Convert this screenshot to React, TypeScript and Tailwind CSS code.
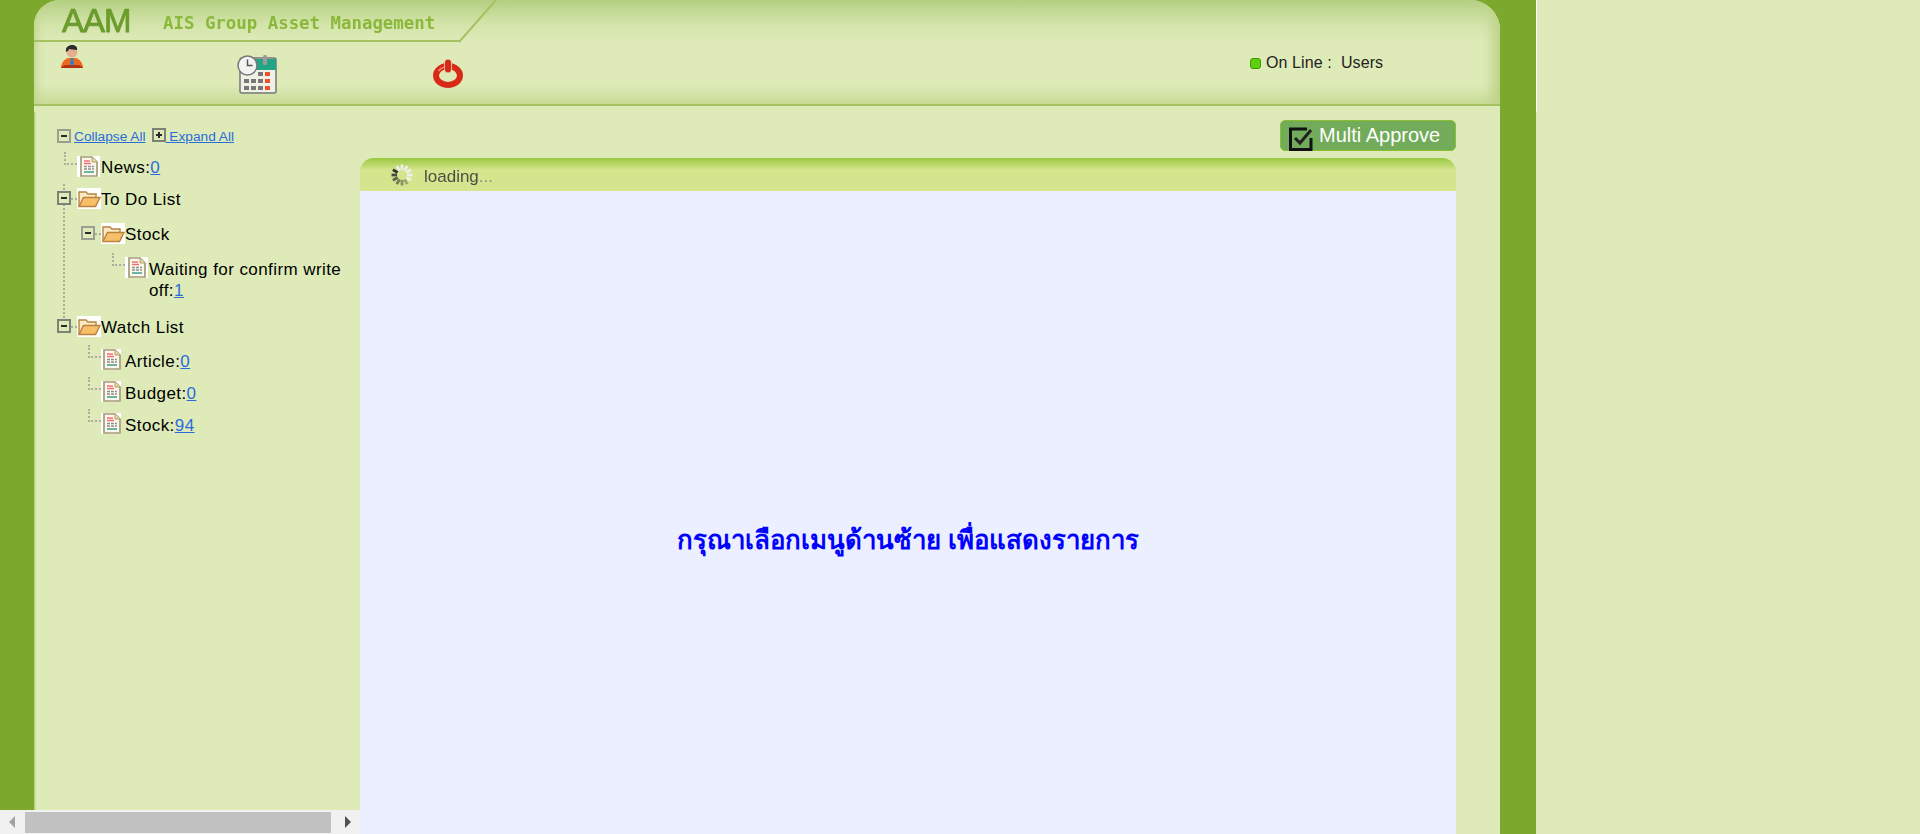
import type { ReactNode } from 'react'

// Tree icons are white-backed in the original, like old gif files
function FileIcon({ w = 23 }: { w?: number }) {
  const x = w === 23 ? 3 : 2
  return (
    <svg width={w} height={21} viewBox={`0 0 ${w} 21`} className="shrink-0 bg-white">
      <g transform={`translate(${x} 0)`}>
        <path d="M1 1h11l5 5v14H1z" fill="#fbf8ef" stroke="#a59a78" strokeWidth="1.7" />
        <path d="M12 1v5h5" fill="#e8d9a8" stroke="#b79f5f" />
        <path d="M4 5h6M4 7.5h7" stroke="#ef6f6f" strokeWidth="1.4" />
        <path d="M4 10.5h10M4 13h10" stroke="#8d8d8d" strokeWidth="1.4" strokeDasharray="3 1" />
        <path d="M4 16h10" stroke="#3f9d83" strokeWidth="1.5" />
      </g>
    </svg>
  )
}

function FolderIcon() {
  return (
    <svg width={24} height={21} viewBox="0 0 24 21" className="shrink-0 bg-white">
      <path d="M2 18V4h7l2 2h8v4" fill="#fbe9c4" stroke="#b9823f" strokeWidth="1.4" />
      <path d="M2 18.5l4.5-9H23l-4.5 9z" fill="#f8bf6b" stroke="#b9823f" strokeWidth="1.4" />
    </svg>
  )
}

function Expander({ open = true, dark = false }: { open?: boolean; dark?: boolean }) {
  return (
    <span className={`relative block h-[14px] w-[14px] shrink-0 border-2 ${dark ? 'border-[#7d8276]' : 'border-[#9a9f92]'}`}>
      <span className="absolute left-[2px] top-[4px] h-[2px] w-[6px] bg-[#2a2a2a]" />
      {!open && <span className="absolute left-[4px] top-[2px] h-[6px] w-[2px] bg-[#2a2a2a]" />}
    </span>
  )
}

// dotted elbow that joins a leaf to its parent
function Elbow() {
  return <span className="mt-[-4px] block h-[13px] w-[13px] shrink-0 border-b-2 border-l-2 border-dotted border-[#a9ae9f]" />
}

function Stub() {
  return <span className="mt-[10px] block w-[6px] border-t-2 border-dotted border-[#a9ae9f]" />
}

function Count({ n }: { n: number }) {
  return <a href="#" className="text-[#2a6bdc] underline">{n}</a>
}

function TreeRow({ indent, top, children }: { indent: number; top: number; children: ReactNode }) {
  return (
    <div
      className="flex min-h-[22px] items-start text-[17px] leading-[21px] tracking-[0.42px] text-black"
      style={{ marginLeft: indent, marginTop: top }}
    >
      {children}
    </div>
  )
}

function Sidebar() {
  return (
    <div className="relative flex-1 bg-[#deebb9] pl-[23px] shadow-[inset_3px_0_2px_-2px_#a9c767]">
      <div className="flex items-start pt-[17px] text-[13.7px] leading-[15px]">
        <span className="mr-[3px]"><Expander /></span>
        <a href="#" className="text-[#2a6bdc] underline">Collapse All</a>
        <span className="ml-[6px] mt-[-1px]"><Expander open={false} dark /></span>
        <a href="#" className="text-[#2a6bdc] underline">&nbsp;Expand All</a>
      </div>
      {/* trunk line of the tree */}
      <span className="absolute left-[29px] top-[72px] h-[134px] border-l-2 border-dotted border-[#a9ae9f]" />

      <TreeRow indent={7} top={12}>
        <Elbow />
        <FileIcon />
        <span className="ml-px mt-px">News:<Count n={0} /></span>
      </TreeRow>
      <TreeRow indent={0} top={10}>
        <span className="relative z-10 mt-[3px] block bg-[#deebb9]"><Expander dark /></span>
        <Stub />
        <FolderIcon />
        <span className="mt-px">To Do List</span>
      </TreeRow>
      <TreeRow indent={24} top={13}>
        <span className="mt-[3px] block"><Expander /></span>
        <Stub />
        <FolderIcon />
        <span className="mt-px">Stock</span>
      </TreeRow>
      <TreeRow indent={55} top={12}>
        <Elbow />
        <FileIcon />
        <span className="ml-px mt-[2px] w-[195px]">Waiting for confirm write off:<Count n={1} /></span>
      </TreeRow>
      <TreeRow indent={0} top={15}>
        <span className="mt-[3px] block"><Expander dark /></span>
        <Stub />
        <FolderIcon />
        <span className="mt-px">Watch List</span>
      </TreeRow>
      <TreeRow indent={31} top={11}>
        <Elbow />
        <FileIcon w={20} />
        <span className="ml-[4px] mt-[2px]">Article:<Count n={0} /></span>
      </TreeRow>
      <TreeRow indent={31} top={9}>
        <Elbow />
        <FileIcon w={20} />
        <span className="ml-[4px] mt-[2px]">Budget:<Count n={0} /></span>
      </TreeRow>
      <TreeRow indent={31} top={9}>
        <Elbow />
        <FileIcon w={20} />
        <span className="ml-[4px] mt-[2px]">Stock:<Count n={94} /></span>
      </TreeRow>
    </div>
  )
}

function Spinner() {
  const spokes = Array.from({ length: 12 }, (_, i) => i)
  return (
    <svg width="24" height="24" viewBox="0 0 24 24" className="shrink-0">
      {spokes.map((i) => {
        const dark = i >= 5 && i <= 10
        return (
          <line
            key={i}
            x1="12" y1="1.5" x2="12" y2="7"
            stroke={dark ? '#333' : '#eef0e6'}
            strokeOpacity={dark ? 0.35 + (i - 5) * 0.13 : 1}
            strokeWidth="2.8"
            transform={`rotate(${i * 30} 12 12)`}
          />
        )
      })}
    </svg>
  )
}

function Header() {
  return (
    <div className="relative h-[112px] shrink-0 bg-[#7ca82e]">
      <div className="ml-[34px] mr-[36px] h-full overflow-hidden rounded-tl-[26px] rounded-tr-[30px] bg-[#deebb9]">
        <div className="h-[106px] border-b-2 border-[#a6c162] bg-[linear-gradient(180deg,#b4cf83_0px,#d3e4a9_24px,#deebb9_42px,#deebb9_84px,#c9dc97_104px)] shadow-[inset_10px_0_10px_-8px_#bdd387,inset_-16px_0_12px_-8px_#bdd387]">
          <div className="mr-[1040px] h-[42px] border-b-2 border-[#a6c162]">
            <div className="flex items-start pl-[28px]">
              <span className="mt-[3px] w-[71px] text-[33px] leading-[36px] tracking-[-1px] text-[#6a9c2c] blur-[0.4px] [-webkit-text-stroke:0.7px_#6a9c2c] [text-shadow:0_1px_1px_rgba(90,110,60,0.3)]">AAM</span>
              <span className="ml-[30px] mt-[13px] whitespace-nowrap text-[17.4px] font-bold leading-[20px] text-[#8ab83a] blur-[0.3px] [font-family:'DejaVu_Sans_Mono',monospace]">AIS Group Asset Management</span>
            </div>
          </div>
          <svg width="40" height="44" viewBox="0 0 40 44" className="absolute left-[459px] top-0" aria-hidden>
            <path d="M0 42 L37 0" stroke="#a6c162" strokeWidth="2" fill="none" />
          </svg>
          <div className="flex items-start">
            {/* person */}
            <svg width="24" height="25" viewBox="0 0 24 25" className="ml-[26px] mt-[2px] shrink-0">
              <path d="M1 24c0-6 4-9 7-10h8c3 1 7 4 7 10z" fill="#ee6a1f" />
              <path d="M1 24c1-2 3-3 6-3h10c3 0 5 1 6 3z" fill="#b5300f" />
              <path d="M11 14h2l1 6-2 2-2-2z" fill="#2f7fd0" />
              <circle cx="12" cy="8" r="5.5" fill="#e3b08f" />
              <path d="M6 8c-1-5 3-7 6-7s6 2 5 5c-3 0-6-1-8-1 0 1-1 2-3 3z" fill="#2b2b2b" />
            </svg>
            {/* calendar */}
            <svg width="40" height="39" viewBox="0 0 40 39" className="ml-[153px] mt-[13px] shrink-0">
              <rect x="3" y="3" width="36" height="35" rx="2" fill="#eef1e4" stroke="#777" strokeWidth="1.5" />
              <path d="M3 4h36v11H3z" fill="#22a584" />
              <rect x="26" y="0" width="4" height="10" rx="1.5" fill="#9a9a9a" />
              <g fill="#777">
                <rect x="7" y="24" width="5" height="4" /><rect x="14" y="24" width="5" height="4" /><rect x="21" y="24" width="5" height="4" />
                <rect x="7" y="31" width="5" height="4" /><rect x="14" y="31" width="5" height="4" /><rect x="21" y="31" width="5" height="4" />
                <rect x="21" y="17" width="5" height="4" />
              </g>
              <g fill="#f1502f">
                <rect x="28" y="17" width="5" height="4" /><rect x="28" y="24" width="5" height="4" /><rect x="28" y="31" width="5" height="4" />
              </g>
              <circle cx="10.5" cy="10.5" r="9.5" fill="#f3f4f1" stroke="#777" strokeWidth="1.5" />
              <path d="M10.5 4.5v6h5" fill="none" stroke="#555" strokeWidth="1.5" />
            </svg>
            {/* power */}
            <svg width="32" height="30" viewBox="0 0 32 30" className="ml-[155px] mt-[16px] shrink-0">
              <ellipse cx="16" cy="17.5" rx="12" ry="9.5" fill="#deebb9" stroke="#d92a18" strokeWidth="6" />
              <path d="M6.5 13c2-2.500 4-3.500 5.500-4" fill="none" stroke="#f5927f" strokeWidth="1.3" />
              <rect x="12.5" y="1" width="7" height="14" rx="3.5" fill="#d92a18" stroke="#deebb9" strokeWidth="0.8" />
            </svg>
            <div className="ml-[786px] mt-[11px] flex items-center whitespace-pre text-[16px] leading-[20px] tracking-[0.1px] text-[#222]">
              <span className="mr-[5px] block h-[11px] w-[11px] rounded-[3px] border border-[#3a9a00] bg-[#5fcf10]" />
              On Line :  Users
            </div>
          </div>
        </div>
      </div>
    </div>
  )
}

export default function App() {
  return (
    <div className="flex h-[834px] w-[1920px] overflow-hidden bg-[#deebb9] font-['Liberation_Sans',Arial,sans-serif]">
      <div className="flex w-[1536px] shrink-0 flex-col">
        <Header />
        <div className="flex min-h-0 flex-1">
          {/* left frame, has its own scrollbar */}
          <div className="flex w-[360px] shrink-0 flex-col">
            <div className="flex min-h-0 flex-1">
              <div className="w-[34px] shrink-0 bg-[#7ca82e]" />
              <Sidebar />
            </div>
            <div className="flex h-[24px] shrink-0 items-center bg-[#f1f1f1]">
              <span className="ml-[9px] block h-0 w-0 border-y-[6px] border-r-[6px] border-y-transparent border-r-[#a3a3a3]" />
              <span className="ml-[10px] block h-[21px] w-[306px] bg-[#c1c1c1]" />
              <span className="ml-[14px] block h-0 w-0 border-y-[6px] border-l-[6px] border-y-transparent border-l-[#505050]" />
            </div>
          </div>

          {/* main frame */}
          <div className="flex min-w-0 flex-1 flex-col bg-[#deebb9]">
            <div className="mr-[44px] flex h-[46px] shrink-0 justify-end pt-[8px]">
              <button className="flex h-[31px] w-[176px] items-start rounded-[5px] border border-[#8ac02f] bg-[#72ab5a] pl-[8px] text-[20px] leading-[28px] text-white">
                <svg width="26" height="24" viewBox="0 0 26 24" className="mt-[6px] shrink-0">
                  <path d="M22 11v11.5H1.5V2H18" fill="none" stroke="#111" strokeWidth="3" />
                  <path d="M6 11l5 5L22 3" fill="none" stroke="#222" strokeWidth="3" />
                </svg>
                <span className="ml-[4px] whitespace-nowrap">Multi Approve</span>
              </button>
            </div>
            <div className="mr-[44px] flex h-[33px] shrink-0 items-center rounded-t-[14px] bg-[linear-gradient(180deg,#9ac83f_0px,#d4e58d_12px,#d4e58d_33px)] pl-[30px]">
              <Spinner />
              <span className="ml-[10px] mt-[5px] text-[17px] text-[#4d4f45] blur-[0.4px]">
                loading<span className="text-[#8f937f]">...</span>
              </span>
            </div>
            <div className="mr-[44px] flex-1 bg-[#ebefff] pt-[330px] text-center text-[25.8px] font-bold leading-[38px] text-[#0000ff]">
              กรุณาเลือกเมนูด้านซ้าย เพื่อแสดงรายการ
            </div>
          </div>

          <div className="w-[36px] shrink-0 bg-[#7ca82e]" />
        </div>
      </div>
      <div className="flex-1">
        <div className="h-[112px] w-px bg-white" />
      </div>
    </div>
  )
}
